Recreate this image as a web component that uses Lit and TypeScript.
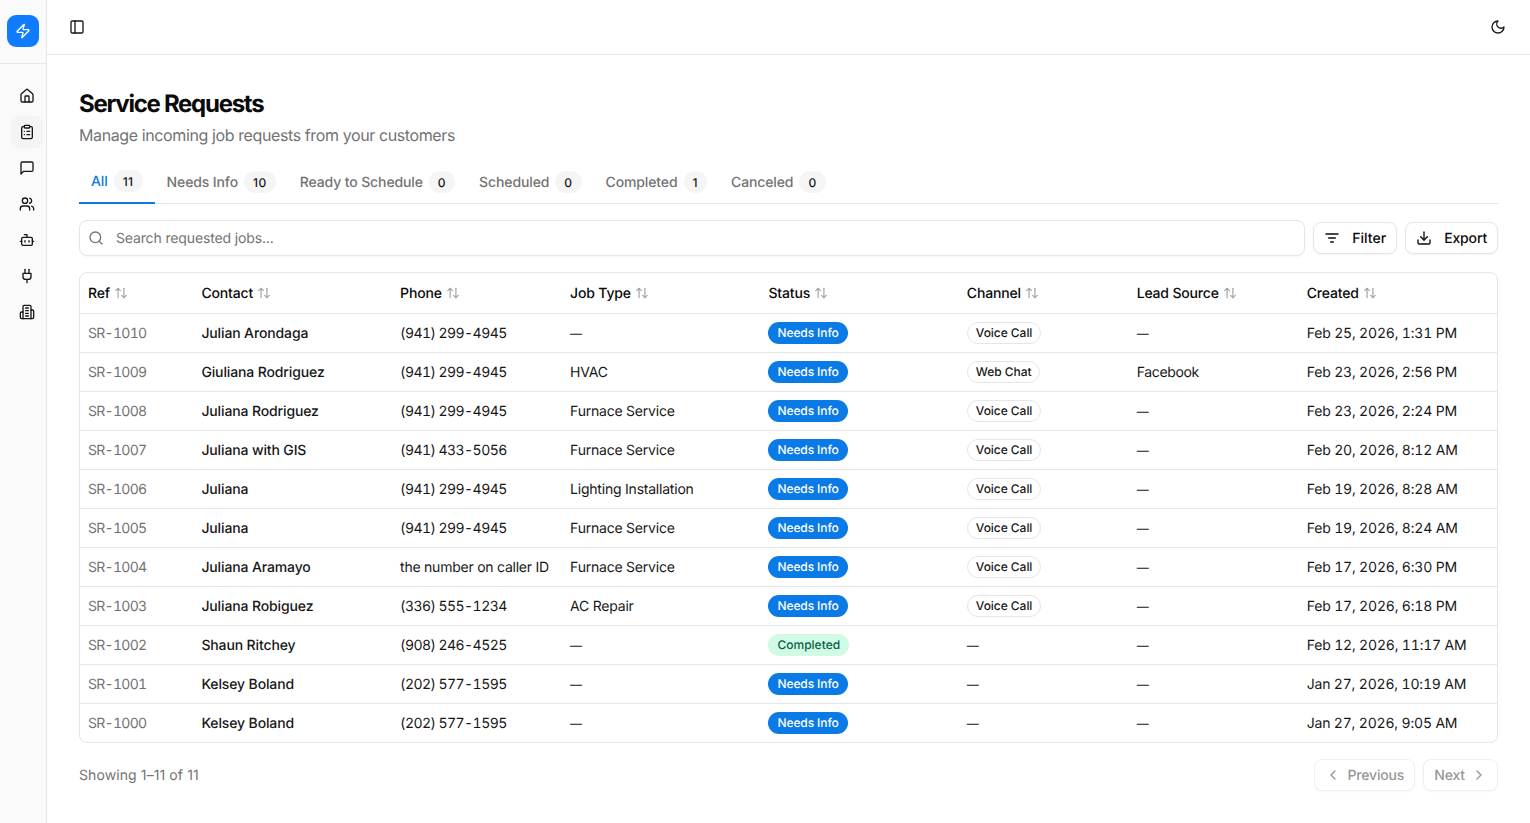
import { LitElement, html, css, svg } from "lit";
import { customElement } from "lit/decorators.js";

const ICONS: Record<string, unknown> = {
  zap: svg`<path d="M4 14a1 1 0 0 1-.78-1.63l9.9-10.2a.5.5 0 0 1 .86.46l-1.92 6.02A1 1 0 0 0 13 10h7a1 1 0 0 1 .78 1.63l-9.9 10.2a.5.5 0 0 1-.86-.46l1.92-6.02A1 1 0 0 0 11 14z"/>`,
  panel: svg`<rect width="18" height="18" x="3" y="3" rx="2"/><path d="M9 3v18"/>`,
  moon: svg`<path d="M12 3a6 6 0 0 0 9 9 9 9 0 1 1-9-9Z"/>`,
  house: svg`<path d="M15 21v-8a1 1 0 0 0-1-1h-4a1 1 0 0 0-1 1v8"/><path d="M3 10a2 2 0 0 1 .709-1.528l7-5.999a2 2 0 0 1 2.582 0l7 5.999A2 2 0 0 1 21 10v9a2 2 0 0 1-2 2H5a2 2 0 0 1-2-2z"/>`,
  clipboard: svg`<rect width="8" height="4" x="8" y="2" rx="1"/><path d="M16 4h2a2 2 0 0 1 2 2v14a2 2 0 0 1-2 2H6a2 2 0 0 1-2-2V6a2 2 0 0 1 2-2h2"/><path d="M12 11h4"/><path d="M12 16h4"/><path d="M8 11h.01"/><path d="M8 16h.01"/>`,
  message: svg`<path d="M21 15a2 2 0 0 1-2 2H7l-4 4V5a2 2 0 0 1 2-2h14a2 2 0 0 1 2 2z"/>`,
  users: svg`<path d="M16 21v-2a4 4 0 0 0-4-4H6a4 4 0 0 0-4 4v2"/><circle cx="9" cy="7" r="4"/><path d="M22 21v-2a4 4 0 0 0-3-3.87"/><path d="M16 3.13a4 4 0 0 1 0 7.75"/>`,
  bot: svg`<path d="M12 8V4H8"/><rect width="16" height="12" x="4" y="8" rx="2"/><path d="M2 14h2"/><path d="M20 14h2"/><path d="M15 13v2"/><path d="M9 13v2"/>`,
  plug: svg`<path d="M12 22v-5"/><path d="M9 8V2"/><path d="M15 8V2"/><path d="M18 8v5a4 4 0 0 1-4 4h-4a4 4 0 0 1-4-4V8Z"/>`,
  building: svg`<path d="M6 22V4a2 2 0 0 1 2-2h8a2 2 0 0 1 2 2v18Z"/><path d="M6 12H4a2 2 0 0 0-2 2v6a2 2 0 0 0 2 2h2"/><path d="M18 9h2a2 2 0 0 1 2 2v9a2 2 0 0 1-2 2h-2"/><path d="M10 6h4"/><path d="M10 10h4"/><path d="M10 14h4"/><path d="M10 18h4"/>`,
  search: svg`<circle cx="11" cy="11" r="8"/><path d="m21 21-4.3-4.3"/>`,
  filter: svg`<path d="M3 6h18"/><path d="M7 12h10"/><path d="M10 18h4"/>`,
  download: svg`<path d="M21 15v4a2 2 0 0 1-2 2H5a2 2 0 0 1-2-2v-4"/><polyline points="7 10 12 15 17 10"/><line x1="12" x2="12" y1="15" y2="3"/>`,
  sort: svg`<path d="m21 16-4 4-4-4"/><path d="M17 20V4"/><path d="m3 8 4-4 4 4"/><path d="M7 4v16"/>`,
  left: svg`<path d="m15 18-6-6 6-6"/>`,
  right: svg`<path d="m9 18 6-6-6-6"/>`,
};

const icon = (name: string) =>
  html`<svg class="ic ic-${name}" viewBox="0 0 24 24" fill="none" stroke="currentColor" stroke-width="2" stroke-linecap="round" stroke-linejoin="round">${ICONS[name]}</svg>`;

const NAV = ["house", "clipboard", "message", "users", "bot", "plug", "building"];
const TABS: [string, number][] = [
  ["All", 11], ["Needs Info", 10], ["Ready to Schedule", 0], ["Scheduled", 0], ["Completed", 1], ["Canceled", 0],
];
const COLS = ["Ref", "Contact", "Phone", "Job Type", "Status", "Channel", "Lead Source", "Created"];
const D = "—";
const ROWS: string[][] = [
  ["SR-1010", "Julian Arondaga", "(941) 299-4945", D, "Needs Info", "Voice Call", D, "Feb 25, 2026, 1:31 PM"],
  ["SR-1009", "Giuliana Rodriguez", "(941) 299-4945", "HVAC", "Needs Info", "Web Chat", "Facebook", "Feb 23, 2026, 2:56 PM"],
  ["SR-1008", "Juliana Rodriguez", "(941) 299-4945", "Furnace Service", "Needs Info", "Voice Call", D, "Feb 23, 2026, 2:24 PM"],
  ["SR-1007", "Juliana with GIS", "(941) 433-5056", "Furnace Service", "Needs Info", "Voice Call", D, "Feb 20, 2026, 8:12 AM"],
  ["SR-1006", "Juliana", "(941) 299-4945", "Lighting Installation", "Needs Info", "Voice Call", D, "Feb 19, 2026, 8:28 AM"],
  ["SR-1005", "Juliana", "(941) 299-4945", "Furnace Service", "Needs Info", "Voice Call", D, "Feb 19, 2026, 8:24 AM"],
  ["SR-1004", "Juliana Aramayo", "the number on caller ID", "Furnace Service", "Needs Info", "Voice Call", D, "Feb 17, 2026, 6:30 PM"],
  ["SR-1003", "Juliana Robiguez", "(336) 555-1234", "AC Repair", "Needs Info", "Voice Call", D, "Feb 17, 2026, 6:18 PM"],
  ["SR-1002", "Shaun Ritchey", "(908) 246-4525", D, "Completed", D, D, "Feb 12, 2026, 11:17 AM"],
  ["SR-1001", "Kelsey Boland", "(202) 577-1595", D, "Needs Info", D, D, "Jan 27, 2026, 10:19 AM"],
  ["SR-1000", "Kelsey Boland", "(202) 577-1595", D, "Needs Info", D, D, "Jan 27, 2026, 9:05 AM"],
];

@customElement("app-root")
export class AppRoot extends LitElement {
  static styles = css`
    :host { display: flex; height: 823px; overflow: hidden; background: #fff; color: #0a0a0a;
      font-family: Inter, "Noto Sans", sans-serif; font-size: 14px; text-rendering: geometricPrecision; }
    * { box-sizing: border-box; }
    .ic { width: 16px; height: 16px; flex: none; display: block; }
    .side { width: 47px; flex: none; background: #fafafa; border-right: 1px solid #e5e5e5; display: flex; flex-direction: column; }
    .brand { height: 64px; flex: none; border-bottom: 1px solid #e5e5e5; padding: 15px 0 0 7px; }
    .logo { width: 32px; height: 32px; border-radius: 9px; background: #0f7bff; color: #fff; display: flex; align-items: center; justify-content: center; }
    .nav { display: flex; flex-direction: column; gap: 4px; padding: 16px 0 0 11px; }
    .nav a { width: 32px; height: 32px; border-radius: 8px; display: flex; align-items: center; justify-content: center; color: #171717; }
    .nav a.on { background: #f3f4f3; }
    .body { flex: 1; min-width: 0; display: flex; flex-direction: column; }
    .top { height: 55px; flex: none; border-bottom: 1px solid #e5e5e5; display: flex; align-items: center; justify-content: space-between; padding: 0 24px 0 22px; color: #171717; }
    .main { padding: 32px 32px 0; }
    h1 { margin: 0; font-size: 24px; line-height: 34px; font-weight: 700; letter-spacing: -1.28px; }
    .sub { margin: 0; font-size: 16px; line-height: 28px; color: #737373; letter-spacing: -0.39px; }
    .tabs { display: flex; margin-top: 12px; border-bottom: 1px solid #e5e5e5; height: 43px; }
    .tab { display: flex; align-items: center; gap: 6px; padding: 0 12px; color: #737373; font-weight: 500; height: 42px; letter-spacing: -0.12px; }
    .tab.on { color: #0a7ae6; border-bottom: 2px solid #0a7ae6; height: 43px; padding-bottom: 1px; }
    .count { height: 22px; padding: 0 9px; border-radius: 11px; background: #f5f5f5; color: #171717; font-size: 12px; display: flex; align-items: center; justify-content: center; letter-spacing: 0.5px; }
    .tools { display: flex; align-items: center; gap: 8px; margin-top: 16px; }
    .search { flex: 1; height: 36px; border: 1px solid #e5e5e5; border-radius: 8px; display: flex; align-items: center; gap: 12px; padding: 0 8px; color: #737373; letter-spacing: -0.14px; box-shadow: 0 1px 2px rgba(0,0,0,.04); }
    .search span { padding-top: 1px; }
    .btn { height: 32px; border: 1px solid #e5e5e5; border-radius: 8px; display: flex; align-items: center; gap: 12px; padding: 0 10px; font-weight: 500; background: #fff; letter-spacing: -0.15px; box-shadow: 0 1px 2px rgba(0,0,0,.04); }
    .btn.flt { letter-spacing: 0; }
    .card { margin-top: 16px; border: 1px solid #e5e5e5; border-radius: 8px; overflow: hidden; }
    table { width: 100%; border-collapse: collapse; table-layout: fixed; }
    th, td { padding: 1px 8px 0; text-align: left; white-space: nowrap; font-weight: 400; border-bottom: 1px solid #e5e5e5; }
    td.pill { padding-top: 0; }
    tr:last-child td { border-bottom: 0; }
    th { height: 40px; font-weight: 500; letter-spacing: -0.17px; }
    td { height: 39px; color: #171717; letter-spacing: -0.22px; }
    .thc { display: flex; align-items: center; gap: 4px; }
    .thc .ic { width: 14px; height: 14px; color: #a3a3a3; }
    col.c1 { width: 113.4px; } col.c2 { width: 198.7px; } col.c3 { width: 170px; } col.c4 { width: 198.4px; }
    col.c5 { width: 198.4px; } col.c6 { width: 169.8px; } col.c7 { width: 170px; }
    td.ref { color: #737373; font-variant-numeric: tabular-nums; letter-spacing: -0.7px; }
    td.name { font-weight: 500; letter-spacing: -0.13px; }
    td.phone { font-variant-numeric: tabular-nums; letter-spacing: -0.57px; }
    td.note { letter-spacing: -0.24px; }
    td.lead { letter-spacing: -0.35px; }
    td.date { font-variant-numeric: tabular-nums; letter-spacing: -0.18px; }
    .dash { font-size: 12px; letter-spacing: 0; }
    .badge { display: inline-flex; align-items: center; height: 22px; padding: 0 9px; border-radius: 11px; font-size: 12px; font-weight: 500; vertical-align: middle; }
    .needs { background: #0a7ae6; color: #fff; letter-spacing: -0.1px; }
    .done { background: #d1fae5; color: #065f46; letter-spacing: 0; }
    .chan { border: 1px solid #e5e5e5; color: #171717; padding: 0 8px; letter-spacing: -0.05px; }
    .foot { display: flex; align-items: center; justify-content: space-between; margin-top: 16px; color: #737373; letter-spacing: 0.1px; }
    .pager { display: flex; gap: 8px; opacity: .6; }
    .pager .btn { gap: 6px; color: #525252; letter-spacing: -0.15px; }
  `;

  private cell(r: string[], i: number) {
    const v = r[i];
    if (v === D) return html`<td><span class="dash">${v}</span></td>`;
    if (i === 0) return html`<td class="ref">${v}</td>`;
    if (i === 1) return html`<td class="name">${v}</td>`;
    if (i === 2) return html`<td class=${v.startsWith("(") ? "phone" : "note"}>${v}</td>`;
    if (i === 4) return html`<td class="pill"><span class="badge ${v === "Completed" ? "done" : "needs"}">${v}</span></td>`;
    if (i === 5) return html`<td class="pill"><span class="badge chan">${v}</span></td>`;
    if (i === 6) return html`<td class="lead">${v}</td>`;
    if (i === 7) return html`<td class="date">${v}</td>`;
    return html`<td>${v}</td>`;
  }

  render() {
    return html`
      <aside class="side">
        <div class="brand"><div class="logo">${icon("zap")}</div></div>
        <nav class="nav">
          ${NAV.map((n) => html`<a class=${n === "clipboard" ? "on" : ""}>${icon(n)}</a>`)}
        </nav>
      </aside>
      <div class="body">
        <header class="top">${icon("panel")}${icon("moon")}</header>
        <main class="main">
          <h1>Service Requests</h1>
          <p class="sub">Manage incoming job requests from your customers</p>
          <div class="tabs">
            ${TABS.map(([t, c], i) => html`<div class="tab ${i === 0 ? "on" : ""}">${t}<span class="count">${c}</span></div>`)}
          </div>
          <div class="tools">
            <div class="search">${icon("search")}<span>Search requested jobs...</span></div>
            <div class="btn flt">${icon("filter")}Filter</div>
            <div class="btn">${icon("download")}Export</div>
          </div>
          <div class="card">
            <table>
              <colgroup>${COLS.map((_, i) => html`<col class="c${i + 1}" />`)}</colgroup>
              <thead><tr>${COLS.map((c) => html`<th><div class="thc">${c}${icon("sort")}</div></th>`)}</tr></thead>
              <tbody>
                ${ROWS.map((r) => html`<tr>${r.map((_, i) => this.cell(r, i))}</tr>`)}
              </tbody>
            </table>
          </div>
          <div class="foot">
            <span>Showing 1–11 of 11</span>
            <div class="pager">
              <div class="btn">${icon("left")}Previous</div>
              <div class="btn">Next${icon("right")}</div>
            </div>
          </div>
        </main>
      </div>
    `;
  }
}
